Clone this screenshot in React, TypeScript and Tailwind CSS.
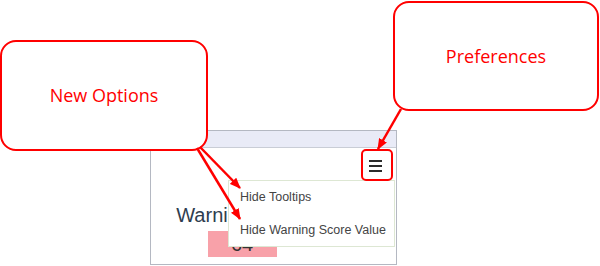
import React from 'react';

const red = '#ff0000';

function Callout({ label, className }: { label: string; className: string }) {
  return (
    <div
      className={`absolute flex items-center justify-center rounded-[16px] border-[2.5px] border-[#ff0000] bg-white text-[18px] text-[#ff0000] font-['Open_Sans',sans-serif] ${className}`}
    >
      {label}
    </div>
  );
}

function Arrows() {
  return (
    <svg className="pointer-events-none absolute inset-0" width={600} height={266} viewBox="0 0 600 266">
      <defs>
        <marker id="head" markerWidth="11" markerHeight="9" refX="10" refY="4.5" orient="auto" markerUnits="userSpaceOnUse">
          <path d="M0,0 L11,4.5 L0,9 Z" fill={red} />
        </marker>
      </defs>
      <line x1={200} y1={147} x2={240} y2={188} stroke={red} strokeWidth={2.5} markerEnd="url(#head)" />
      <line x1={197} y1={148} x2={240} y2={219} stroke={red} strokeWidth={2.5} markerEnd="url(#head)" />
      <line x1={401} y1={109} x2={378} y2={149} stroke={red} strokeWidth={2.5} markerEnd="url(#head)" />
    </svg>
  );
}

export default function App() {
  return (
    <div className="relative h-[266px] w-[600px] overflow-hidden bg-white">
      {/* widget under annotation */}
      <div className="absolute left-[150px] top-[130px] h-[135px] w-[247px] border border-[#b4b8c2] bg-white">
        <div className="h-[17px] border-b border-[#c9cdd6] bg-[#e9ebf7]" />
        <div className="flex w-[182px] flex-col items-center pt-[54px]">
          <div className="text-[20px] leading-[26px] text-[#2e3d4f] font-['Liberation_Sans',sans-serif]">Warning Score</div>
          <div className="mt-[3px] flex h-[26px] w-[69px] items-center justify-center bg-[#f8a1a9] text-[20px] text-[#333] font-['Liberation_Sans',sans-serif]">
            64
          </div>
        </div>
        <div className="absolute left-[218px] top-[29px] flex flex-col gap-[3px]">
          <span className="h-[2px] w-[13px] bg-[#2b2b2b]" />
          <span className="h-[2px] w-[13px] bg-[#2b2b2b]" />
          <span className="h-[2px] w-[13px] bg-[#2b2b2b]" />
        </div>
      </div>

      {/* dropdown */}
      <div className="absolute left-[228px] top-[180px] flex w-[167px] flex-col border border-[#dde7d3] bg-white text-[12.5px] text-[#444] font-['Liberation_Sans',sans-serif]">
        <div className="flex h-[33px] items-center pl-[11px]">Hide Tooltips</div>
        <div className="flex h-[32px] items-center pl-[11px]">Hide Warning Score Value</div>
      </div>

      {/* highlight on menu button */}
      <div className="absolute left-[361px] top-[149px] h-[32px] w-[32px] rounded-[5px] border-2 border-[#ff0000]" />

      <Callout label="New Options" className="left-0 top-[40px] h-[111px] w-[208px]" />
      <Callout label="Preferences" className="left-[393px] top-[1px] h-[110px] w-[206px]" />

      <Arrows />
    </div>
  );
}
